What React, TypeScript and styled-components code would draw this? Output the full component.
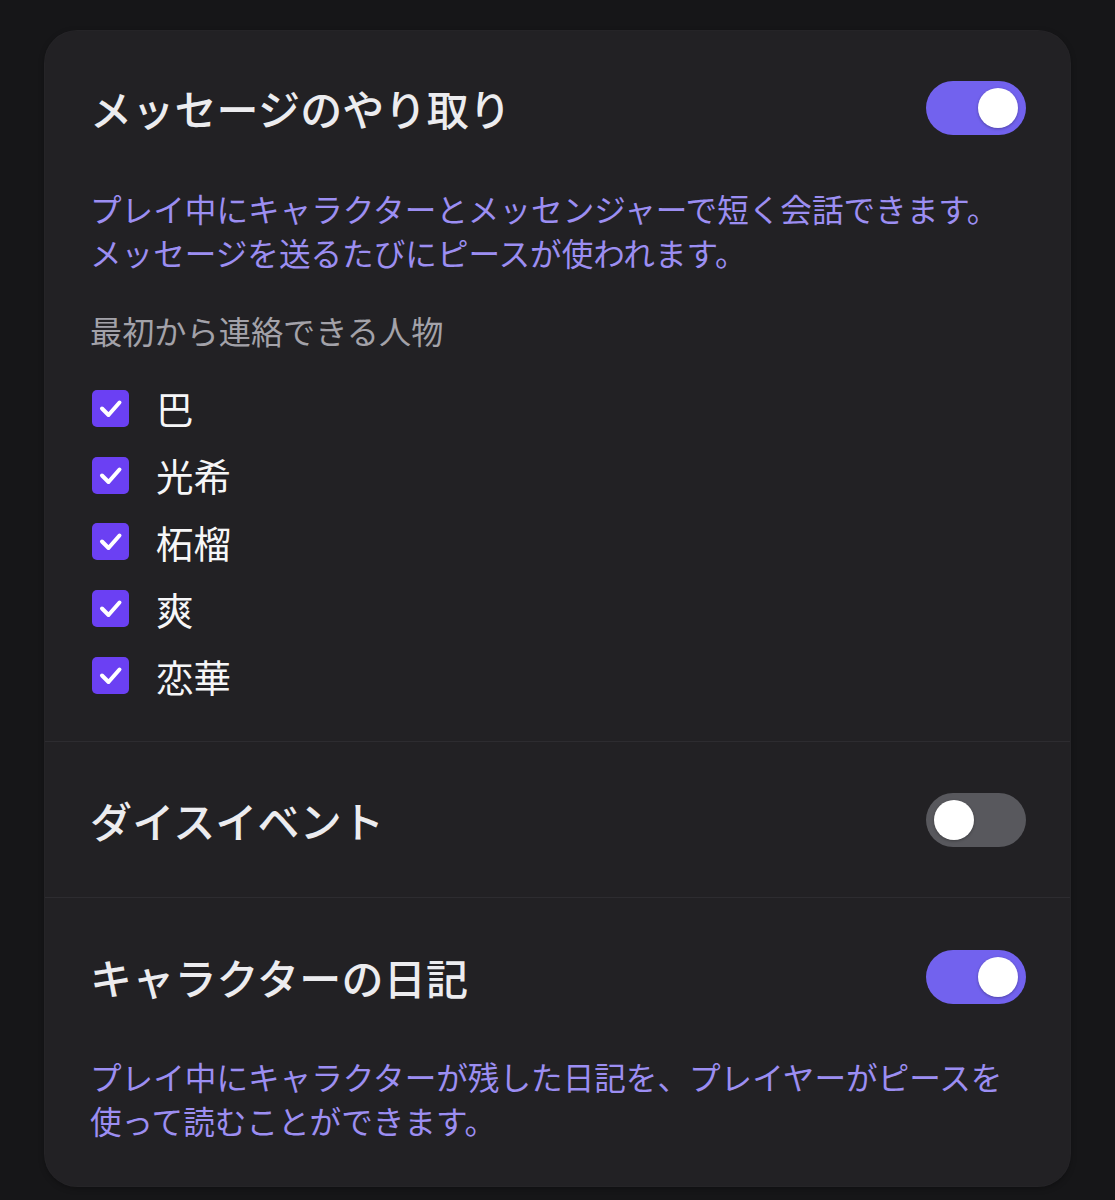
import React from "react";
import styled, { createGlobalStyle } from "styled-components";

const GlobalStyle = createGlobalStyle`
  html, body {
    margin: 0;
    padding: 0;
    background: #161618;
  }
  body {
    font-family: "Noto Sans CJK JP", "Noto Sans", sans-serif;
    -webkit-font-smoothing: antialiased;
  }
`;

const Page = styled.div`
  padding: 31px 45px 12px 45px;
  min-height: 1200px;
  box-sizing: border-box;
`;

const Card = styled.div`
  width: 1025px;
  background: #222124;
  border-radius: 32px;
  box-shadow: 0 0 0 1px #252427, 0 2px 6px rgba(0, 0, 0, 0.35);
  overflow: hidden;
`;

const Section = styled.section<{ $pt: number; $pb: number; $divider?: boolean }>`
  padding: ${(p) => p.$pt}px 44px ${(p) => p.$pb}px 45px;
  border-top: ${(p) => (p.$divider ? "1px solid #2d2c30" : "none")};
`;

const HeaderRow = styled.div`
  display: flex;
  align-items: center;
  justify-content: space-between;
  height: 54px;
`;

const Title = styled.h2`
  margin: 0;
  font-size: 42px;
  font-weight: 500;
  color: #ececef;
  letter-spacing: 0.2px;
  line-height: 54px;
`;

const SwitchTrack = styled.button<{ $on: boolean }>`
  width: 100px;
  height: 54px;
  border: none;
  border-radius: 27px;
  padding: 0 8px;
  display: flex;
  align-items: center;
  justify-content: ${(p) => (p.$on ? "flex-end" : "flex-start")};
  background: ${(p) => (p.$on ? "#7262ee" : "#58585d")};
  cursor: pointer;
`;

const Knob = styled.span`
  width: 40px;
  height: 40px;
  border-radius: 50%;
  background: #ffffff;
  box-shadow: 0 1px 3px rgba(0, 0, 0, 0.3);
`;

const Description = styled.p<{ $mt: number }>`
  margin: ${(p) => p.$mt}px 0 0 0;
  font-size: 31.6px;
  line-height: 44px;
  color: #9c8ef2;
  font-weight: 400;
`;

const Label = styled.div`
  margin-top: 34px;
  font-size: 32.2px;
  line-height: 44px;
  color: #a3a2a9;
`;

const CheckList = styled.ul`
  list-style: none;
  margin: 23px 0 0 0;
  padding: 0;
  display: flex;
  flex-direction: column;
`;

const CheckRow = styled.li`
  display: flex;
  align-items: center;
  height: 66.8px;
  gap: 27px;
  padding-left: 2px;
`;

const Box = styled.span`
  width: 37px;
  height: 37px;
  border-radius: 5px;
  background: #6b40f3;
  display: flex;
  align-items: center;
  justify-content: center;
  flex-shrink: 0;
`;

const Name = styled.span`
  font-size: 37.5px;
  color: #f6f6f7;
  line-height: 44px;
`;

const Toggle = ({ on }: { on: boolean }) => (
  <SwitchTrack $on={on} aria-pressed={on}>
    <Knob />
  </SwitchTrack>
);

const CheckItem = ({ name }: { name: string }) => (
  <CheckRow>
    <Box>
      <svg width="37" height="37" viewBox="0 0 37 37">
        <polyline
          points="10,18.5 16.5,25 27.5,12.5"
          fill="none"
          stroke="#ffffff"
          strokeWidth="4"
          strokeLinecap="round"
          strokeLinejoin="round"
        />
      </svg>
    </Box>
    <Name>{name}</Name>
  </CheckRow>
);

const names = ["巴", "光希", "柘榴", "爽", "恋華"];

export default function App() {
  return (
    <>
      <GlobalStyle />
      <Page>
        <Card>
          <Section $pt={50} $pb={32}>
            <HeaderRow>
              <Title>メッセージのやり取り</Title>
              <Toggle on />
            </HeaderRow>
            <Description $mt={51}>
              プレイ中にキャラクターとメッセンジャーで短く会話できます。
              <br />
              メッセージを送るたびにピースが使われます。
            </Description>
            <Label>最初から連絡できる人物</Label>
            <CheckList>
              {names.map((n) => (
                <CheckItem key={n} name={n} />
              ))}
            </CheckList>
          </Section>
          <Section $pt={51} $pb={50} $divider>
            <HeaderRow>
              <Title>ダイスイベント</Title>
              <Toggle on={false} />
            </HeaderRow>
          </Section>
          <Section $pt={52} $pb={44} $divider>
            <HeaderRow>
              <Title>キャラクターの日記</Title>
              <Toggle on />
            </HeaderRow>
            <Description $mt={50}>
              プレイ中にキャラクターが残した日記を、プレイヤーがピースを
              <br />
              使って読むことができます。
            </Description>
          </Section>
        </Card>
      </Page>
    </>
  );
}
